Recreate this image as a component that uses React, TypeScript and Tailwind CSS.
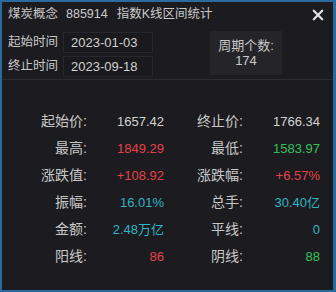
import React from 'react';

interface Stat {
    label: string;
    value: string;
    color: string;
}

const rows: [Stat, Stat][] = [
    [
        { label: '起始价:', value: '1657.42', color: 'text-[#d2d2d2]' },
        { label: '终止价:', value: '1766.34', color: 'text-[#d2d2d2]' },
    ],
    [
        { label: '最高:', value: '1849.29', color: 'text-[#e5414b]' },
        { label: '最低:', value: '1583.97', color: 'text-[#36c05c]' },
    ],
    [
        { label: '涨跌值:', value: '+108.92', color: 'text-[#e5414b]' },
        { label: '涨跌幅:', value: '+6.57%', color: 'text-[#e5414b]' },
    ],
    [
        { label: '振幅:', value: '16.01%', color: 'text-[#2fb3c6]' },
        { label: '总手:', value: '30.40亿', color: 'text-[#2fb3c6]' },
    ],
    [
        { label: '金额:', value: '2.48万亿', color: 'text-[#2fb3c6]' },
        { label: '平线:', value: '0', color: 'text-[#2fb3c6]' },
    ],
    [
        { label: '阳线:', value: '86', color: 'text-[#e5414b]' },
        { label: '阴线:', value: '88', color: 'text-[#36c05c]' },
    ],
];

const font = { fontFamily: '"Liberation Sans", "Noto Sans CJK SC", sans-serif' };

const App: React.FC = () => {
    return (
        <div className="w-[336px] h-[292px] bg-[#2a6a9c] pt-[2px] pl-[2px] pr-[3px] pb-[2px]" style={font}>
            <div className="w-full h-full bg-[#1c1c20] flex flex-col text-[13px]">
                {/* title bar */}
                <div className="h-[25px] flex items-center pl-[6px] pr-[9px] text-[#cacaca] text-[12.5px]">
                    <span>煤炭概念</span>
                    <span className="ml-[8px]">885914</span>
                    <span className="ml-[9px]">指数K线区间统计</span>
                    <svg className="ml-auto" width="12" height="12" viewBox="0 0 12 12">
                        <path d="M1.8 1.8 L10.2 10.2 M10.2 1.8 L1.8 10.2" stroke="#e0e0e0" strokeWidth="2.3" strokeLinecap="round" />
                    </svg>
                </div>

                {/* range */}
                <div className="flex h-[53px] border-b border-[#2c2c31] pl-[6px]">
                    <div className="flex flex-col gap-[3px] pt-[5px]">
                        <div className="flex items-center">
                            <span className="w-[55px] text-[#c8c8c8] text-[12.5px]">起始时间</span>
                            <div className="w-[90px] h-[21px] bg-[#1a1a1e] border border-[#27272c] pl-[7px] flex items-center text-[#d2d2d2]">2023-01-03</div>
                        </div>
                        <div className="flex items-center">
                            <span className="w-[55px] text-[#c8c8c8] text-[12.5px]">终止时间</span>
                            <div className="w-[90px] h-[21px] bg-[#1a1a1e] border border-[#27272c] pl-[7px] flex items-center text-[#d2d2d2]">2023-09-18</div>
                        </div>
                    </div>
                    <div className="ml-[57px] mt-[4px] w-[72px] h-[44px] bg-[#252529] flex flex-col items-center justify-center leading-[15px] text-[#c8c8c8]">
                        <span>周期个数:</span>
                        <span>174</span>
                    </div>
                </div>

                {/* stats */}
                <div className="pt-[28px] grid grid-cols-[85px_77px_79px_77px] auto-rows-[27px]">
                    {rows.map((row, i) => (
                        <React.Fragment key={i}>
                            {row.map((s) => (
                                <React.Fragment key={s.label}>
                                    <div className="flex items-center justify-end text-[#c8c8c8] text-[14px]">{s.label}</div>
                                    <div className={`flex items-center justify-end ${s.color}`}>{s.value}</div>
                                </React.Fragment>
                            ))}
                        </React.Fragment>
                    ))}
                </div>
            </div>
        </div>
    );
};

export default App;
